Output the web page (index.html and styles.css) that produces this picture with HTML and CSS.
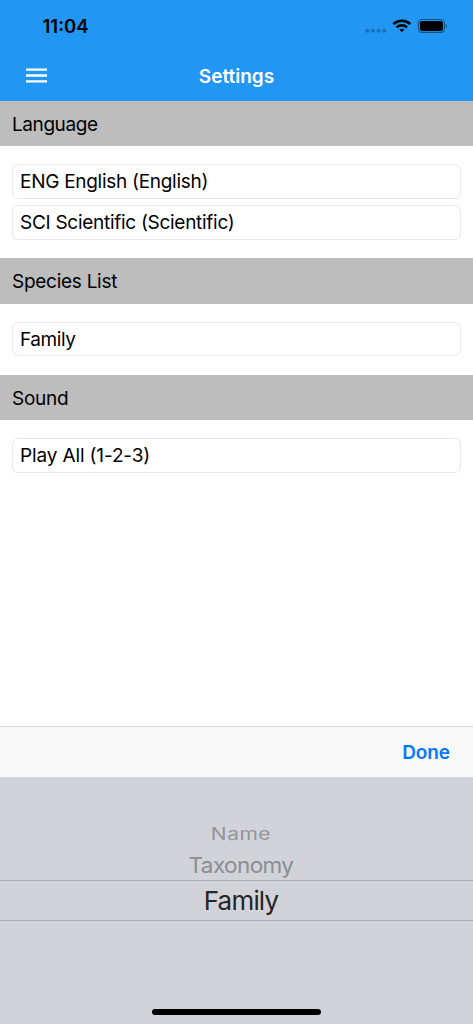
FILE: index.html
```html
<!DOCTYPE html>
<html lang="en">
<head>
<meta charset="utf-8">
<title>Settings</title>
<link rel="stylesheet" href="styles.css">
</head>
<body>
<div class="screen">
  <header class="top">
    <div class="status">
      <span class="time">11:04</span>
      <svg class="status-icons" width="84" height="20" viewBox="0 0 84 20">
        <g fill="#000" opacity=".25"><circle cx="2.3" cy="13.7" r="2"/><circle cx="8" cy="13.7" r="2"/><circle cx="13.6" cy="13.7" r="2"/><circle cx="19.3" cy="13.7" r="2"/></g>
        <g fill="none" stroke="#000" stroke-width="2.6">
          <path d="M28.4 7.1C33.1 2.6 40.5 2.6 45.2 7.1"/>
          <path d="M31.6 10.4C34.6 7.6 39 7.6 42 10.4"/>
        </g>
        <path d="M34.3 12.6C35.7 11.3 37.9 11.3 39.3 12.6L36.8 15.3Z"/>
        <rect x="53.4" y="2.5" width="26" height="12.9" rx="3.6" fill="none" stroke="#000" stroke-opacity=".45" stroke-width="1.1"/>
        <rect x="54.9" y="4.1" width="23" height="9.8" rx="2.2"/>
        <path d="M80.7 6.9C82.2 7.4 82.2 10.6 80.7 11.1Z" fill-opacity=".5"/>
      </svg>
    </div>
    <div class="navbar">
      <svg class="menu" width="21" height="15" viewBox="0 0 21 15"><path d="M0 1.7H21M0 7.5H21M0 13.3H21" stroke="#fff" stroke-width="2.3"/></svg>
      <h1 class="title">Settings</h1>
    </div>
  </header>
  <main class="content">
    <h2 class="section tight">Language</h2>
    <div class="fields">
      <div class="field">ENG English (English)</div>
      <div class="field">SCI Scientific (Scientific)</div>
    </div>
    <h2 class="section species">Species List</h2>
    <div class="fields">
      <div class="field tight">Family</div>
    </div>
    <h2 class="section">Sound</h2>
    <div class="fields">
      <div class="field loose">Play All (1-2-3)</div>
    </div>
  </main>
  <div class="toolbar"><span class="done">Done</span></div>
  <div class="picker">
    <div class="option far"><span>Name</span></div>
    <div class="option near"><span>Taxonomy</span></div>
    <div class="option selected"><span>Family</span></div>
    <div class="home"></div>
  </div>
</div>
</body>
</html>
```
FILE: styles.css
```css
* { box-sizing: border-box; }
body { margin: 0; font-family: Inter, "Liberation Sans", sans-serif; font-size: 19px; color: #000; background: #fff; }
h1, h2 { margin: 0; }
.screen { width: 473px; height: 1024px; display: flex; flex-direction: column; overflow: hidden; }
.top { height: 101px; background: #2196f3; flex: none; }
.status { height: 51px; padding: 16px 24px 0 42.5px; display: flex; justify-content: space-between; align-items: flex-start; }
.time { font-size: 18.5px; font-weight: 600; line-height: 21px; }
.status-icons { display: block; margin-top: 1px; }
.navbar { height: 50px; display: grid; grid-template-columns: 80px 1fr 80px; align-items: center; }
.menu { margin-left: 26px; margin-top: -1px; }
.title { color: #fff; font-size: 19px; font-weight: 600; line-height: 24px; text-align: center; padding-top: 1px; }
.content { flex: 1; }
.section { height: 45.2px; padding-left: 12px; background: #bdbdbd; font-size: 19px; font-weight: 400; line-height: 47px; letter-spacing: -.27px; }
.section.species { line-height: 48px; }
.fields { padding: 18.2px 12px 18.6px 11.5px; display: flex; flex-direction: column; gap: 6.4px; }
.field { height: 34.5px; padding-left: 7.5px; border: 1px solid #e8e8e8; border-radius: 6px; line-height: 34.5px; letter-spacing: -.28px; white-space: nowrap; }
.section.tight, .field.tight { letter-spacing: -.42px; }
.field.loose { letter-spacing: -.14px; }
.toolbar { height: 51px; flex: none; padding-right: 23px; border-top: 1px solid #d7d8d9; background: #f8f8f8; color: #007aff; font-weight: 600; line-height: 51px; text-align: right; letter-spacing: -.1px; }
.picker { height: 247px; flex: none; padding-top: 46px; background: #d1d3d9; display: flex; flex-direction: column; align-items: center; }
.option { width: 100%; padding-left: 9px; text-align: center; }
.option span { display: inline-block; }
.far { height: 24px; line-height: 22px; font-size: 21px; color: #939599; letter-spacing: .5px; }
.far span { transform: scaleY(.8); }
.near { height: 33px; line-height: 35px; font-size: 22.5px; color: #8b8d91; letter-spacing: -.6px; }
.near span { transform: scaleY(.95); }
.selected { height: 41px; border-top: 1px solid #abadb2; border-bottom: 1px solid #abadb2; line-height: 40px; font-size: 26px; color: #242527; letter-spacing: -.8px; }
.home { width: 169px; height: 6px; border-radius: 3px; background: #000; margin-top: 87.5px; }
```
